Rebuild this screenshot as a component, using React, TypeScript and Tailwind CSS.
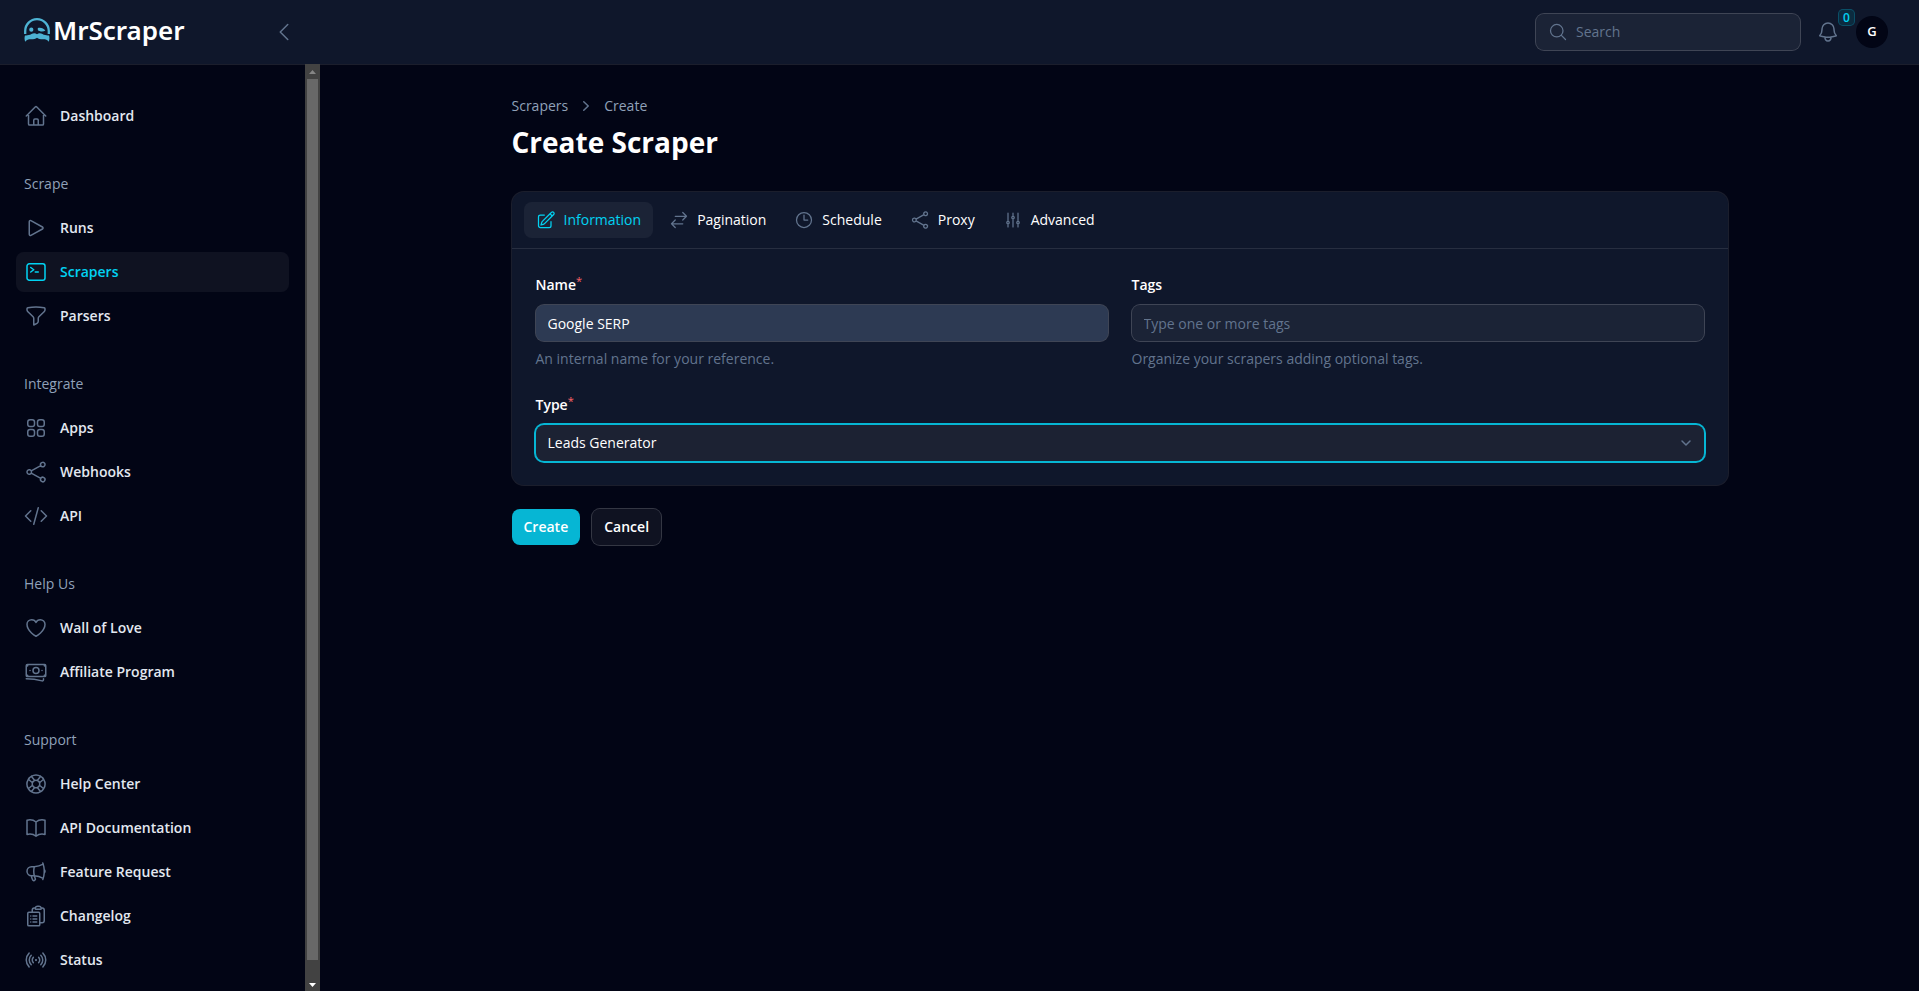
import React, { useState } from 'react';
import type { IconType } from 'react-icons';
import {
  HiOutlineAdjustmentsVertical,
  HiOutlineArrowsRightLeft,
  HiOutlineBanknotes,
  HiOutlineBell,
  HiOutlineBookOpen,
  HiOutlineChevronLeft,
  HiOutlineClipboardDocumentList,
  HiOutlineClock,
  HiOutlineCodeBracket,
  HiOutlineCommandLine,
  HiOutlineFunnel,
  HiOutlineHeart,
  HiOutlineHome,
  HiOutlineLifebuoy,
  HiOutlineMagnifyingGlass,
  HiOutlineMegaphone,
  HiOutlinePencilSquare,
  HiOutlinePlay,
  HiOutlineShare,
  HiOutlineSignal,
  HiOutlineSquares2X2,
} from 'react-icons/hi2';

type NavItem = { label: string; icon: IconType; active?: boolean };
type NavGroup = { label?: string; items: NavItem[] };

const navGroups: NavGroup[] = [
  { items: [{ label: 'Dashboard', icon: HiOutlineHome }] },
  {
    label: 'Scrape',
    items: [
      { label: 'Runs', icon: HiOutlinePlay },
      { label: 'Scrapers', icon: HiOutlineCommandLine, active: true },
      { label: 'Parsers', icon: HiOutlineFunnel },
    ],
  },
  {
    label: 'Integrate',
    items: [
      { label: 'Apps', icon: HiOutlineSquares2X2 },
      { label: 'Webhooks', icon: HiOutlineShare },
      { label: 'API', icon: HiOutlineCodeBracket },
    ],
  },
  {
    label: 'Help Us',
    items: [
      { label: 'Wall of Love', icon: HiOutlineHeart },
      { label: 'Affiliate Program', icon: HiOutlineBanknotes },
    ],
  },
  {
    label: 'Support',
    items: [
      { label: 'Help Center', icon: HiOutlineLifebuoy },
      { label: 'API Documentation', icon: HiOutlineBookOpen },
      { label: 'Feature Request', icon: HiOutlineMegaphone },
      { label: 'Changelog', icon: HiOutlineClipboardDocumentList },
      { label: 'Status', icon: HiOutlineSignal },
    ],
  },
];

const tabs: { label: string; icon: IconType }[] = [
  { label: 'Information', icon: HiOutlinePencilSquare },
  { label: 'Pagination', icon: HiOutlineArrowsRightLeft },
  { label: 'Schedule', icon: HiOutlineClock },
  { label: 'Proxy', icon: HiOutlineShare },
  { label: 'Advanced', icon: HiOutlineAdjustmentsVertical },
];

const Logo = () => (
  <a href="#" className="flex items-center gap-[3px] pb-1 text-white">
    <svg width="26" height="24" viewBox="0 0 26 24" fill="none" className="text-[#4db3d3]">
      <path d="M1.200 16v-3a11.800 11.800 0 0 1 23.600 0v3" stroke="currentColor" strokeWidth="2.300" />
      <circle cx="7.300" cy="11.700" r="2.100" fill="currentColor" />
      <path d="M13.800 10c3-.8 6 .3 7.600 2.600-2 1.300-6 1.200-7.600-.6z" fill="currentColor" />
      <path
        d="M13 16.300c1.600-1.500 3.800-1.200 5.500-.3 2.200 1.200 4.200 1.600 6.500 1.400.7 2 .6 4.200-.3 6.300-1.300-2.200-3.700-2.600-6-2.500-2.300 0-4.300-.2-5.700-1.500-1.400 1.300-3.400 1.500-5.700 1.500-2.300-.1-4.700.3-6 2.500-.9-2.100-1-4.300-.3-6.300 2.300.2 4.300-.2 6.500-1.400 1.700-.9 3.900-1.200 5.500.3z"
        fill="currentColor"
      />
    </svg>
    <span className="font-['Noto_Sans',sans-serif] text-[26px] leading-8 font-semibold">MrScraper</span>
  </a>
);

const Sidebar = () => (
  <aside className="flex w-80 shrink-0">
    <nav className="flex flex-1 flex-col gap-7 overflow-hidden px-4 py-8">
      {navGroups.map((group, i) => (
        <div key={group.label ?? i} className="flex flex-col gap-1">
          {group.label && <h2 className="px-2 py-2.5 text-sm leading-5 font-medium text-slate-400">{group.label}</h2>}
          <ul className="flex flex-col gap-1">
            {group.items.map(({ label, icon: Icon, active }) => (
              <li key={label}>
                <a
                  href="#"
                  className={`flex items-center gap-3 rounded-lg p-2 text-sm leading-5 font-[550] ${
                    active ? 'bg-white/5 text-cyan-400' : 'text-slate-200 hover:bg-white/5'
                  }`}
                >
                  <Icon className={`size-6 ${active ? 'text-cyan-400' : 'text-slate-500'}`} />
                  {label}
                </a>
              </li>
            ))}
          </ul>
        </div>
      ))}
    </nav>
    {/* Scroll track */}
    <div className="flex w-[15px] flex-col items-center bg-[#424242]">
      <svg width="15" height="15" viewBox="0 0 15 15">
        <path d="M4 10h7L7.500 6z" fill="#868686" />
      </svg>
      <div className="w-[11px] flex-1 bg-[#686868]" />
      <div className="h-4" />
      <svg width="15" height="15" viewBox="0 0 15 15">
        <path d="M4 7h7l-3.500 4z" fill="#fff" />
      </svg>
    </div>
  </aside>
);

const Topbar = () => (
  <header className="flex h-16 shrink-0 items-center justify-between bg-slate-900 pr-[31px] pl-6 ring-1 ring-white/10">
    <div className="flex w-[272px] items-center justify-between">
      <Logo />
      <button type="button" aria-label="Collapse sidebar" className="text-slate-500">
        <HiOutlineChevronLeft className="size-6" />
      </button>
    </div>
    <div className="flex items-center gap-4">
      <label className="flex h-9 w-[264px] items-center gap-2 rounded-lg bg-white/5 px-3 ring-1 ring-white/20">
        <HiOutlineMagnifyingGlass className="size-5 shrink-0 text-slate-500" />
        <input
          type="search"
          aria-label="Search"
          placeholder="Search"
          className="w-full min-w-0 bg-transparent text-sm leading-5 text-white outline-none placeholder:text-slate-500"
        />
      </label>
      <button type="button" aria-label="Notifications" className="relative text-slate-500">
        <HiOutlineBell className="size-6" />
        <span className="absolute -top-2.5 left-[23px] flex size-[15px] items-center justify-center rounded-sm bg-[#0c2b3f] text-xs leading-4 font-semibold text-cyan-400 ring-1 ring-cyan-400/30">
          0
        </span>
      </button>
      <button
        type="button"
        className="flex size-8 items-center justify-center rounded-full bg-[#020515] text-[13px] font-semibold text-white"
      >
        G
      </button>
    </div>
  </header>
);

const Required = () => <sup className="text-[11px] font-medium text-red-400">*</sup>;

const App: React.FC = () => {
  const [tab, setTab] = useState('Information');
  const [name, setName] = useState('Google SERP');

  return (
    <div className="flex h-screen flex-col bg-[#020515] font-['Open_Sans',sans-serif] text-white">
      <Topbar />
      <div className="flex min-h-0 flex-1">
        <Sidebar />
        <main className="flex-1 overflow-hidden">
          <div className="mx-auto max-w-7xl px-8 py-8">
            <nav className="flex items-center gap-2 text-sm leading-5 font-medium text-slate-400">
              <a href="#">Scrapers</a>
              <svg className="size-5 text-slate-500" viewBox="0 0 20 20" fill="currentColor">
                <path d="M7.210 14.770a.75.75 0 0 1 .02-1.060L11.168 10 7.230 6.290a.75.75 0 1 1 1.040-1.080l4.500 4.250a.75.75 0 0 1 0 1.080l-4.500 4.250a.75.75 0 0 1-1.060-.02z" />
              </svg>
              <a href="#">Create</a>
            </nav>
            <h1 className="mt-2 text-[28px] leading-9 font-bold">Create Scraper</h1>

            <form className="mt-8" onSubmit={(e) => e.preventDefault()}>
              <section className="rounded-xl bg-slate-900 ring-1 ring-white/10">
                <div role="tablist" className="flex gap-1 border-b border-white/10 px-3 py-2.5">
                  {tabs.map(({ label, icon: Icon }) => (
                    <button
                      key={label}
                      type="button"
                      role="tab"
                      aria-selected={tab === label}
                      onClick={() => setTab(label)}
                      className={`flex items-center gap-2 rounded-lg px-3 py-2 text-sm leading-5 font-medium ${
                        tab === label ? 'bg-white/5 text-cyan-400' : 'text-white'
                      }`}
                    >
                      <Icon className={`size-5 ${tab === label ? 'text-cyan-400' : 'text-slate-500'}`} />
                      {label}
                    </button>
                  ))}
                </div>

                <div className="grid grid-cols-2 gap-6 p-6 text-sm leading-5">
                  <div className="flex flex-col gap-2">
                    <label htmlFor="name" className="leading-6 font-[550]">
                      Name
                      <Required />
                    </label>
                    <input
                      id="name"
                      value={name}
                      onChange={(e) => setName(e.target.value)}
                      className="h-9 rounded-lg bg-[#2d3a53] px-3 ring-1 ring-white/20 outline-none"
                    />
                    <p className="text-slate-500">An internal name for your reference.</p>
                  </div>
                  <div className="flex flex-col gap-2">
                    <label htmlFor="tags" className="leading-6 font-[550]">
                      Tags
                    </label>
                    <input
                      id="tags"
                      placeholder="Type one or more tags"
                      className="h-9 rounded-lg bg-white/5 px-3 ring-1 ring-white/20 outline-none placeholder:text-slate-500"
                    />
                    <p className="text-slate-500">Organize your scrapers adding optional tags.</p>
                  </div>
                  <div className="col-span-2 flex flex-col gap-2">
                    <label htmlFor="type" className="leading-6 font-[550]">
                      Type
                      <Required />
                    </label>
                    <div className="relative">
                      <select
                        id="type"
                        className="h-9 w-full appearance-none rounded-lg bg-[#1c2233] px-3 ring-2 ring-[#06b6d4] outline-none"
                      >
                        <option>Leads Generator</option>
                      </select>
                      <svg
                        className="pointer-events-none absolute top-2 right-2 size-5 text-slate-500"
                        viewBox="0 0 20 20"
                        fill="none"
                        stroke="currentColor"
                        strokeWidth="1.5"
                        strokeLinecap="round"
                        strokeLinejoin="round"
                      >
                        <path d="m6 8 4 4 4-4" />
                      </svg>
                    </div>
                  </div>
                </div>
              </section>

              <div className="mt-6 flex gap-3 text-sm leading-5 font-semibold">
                <button type="submit" className="rounded-lg bg-[#06b6d4] px-3 py-2">
                  Create
                </button>
                <button type="button" className="rounded-lg bg-white/5 px-3 py-2 ring-1 ring-white/20">
                  Cancel
                </button>
              </div>
            </form>
          </div>
        </main>
      </div>
    </div>
  );
};

export default App;
